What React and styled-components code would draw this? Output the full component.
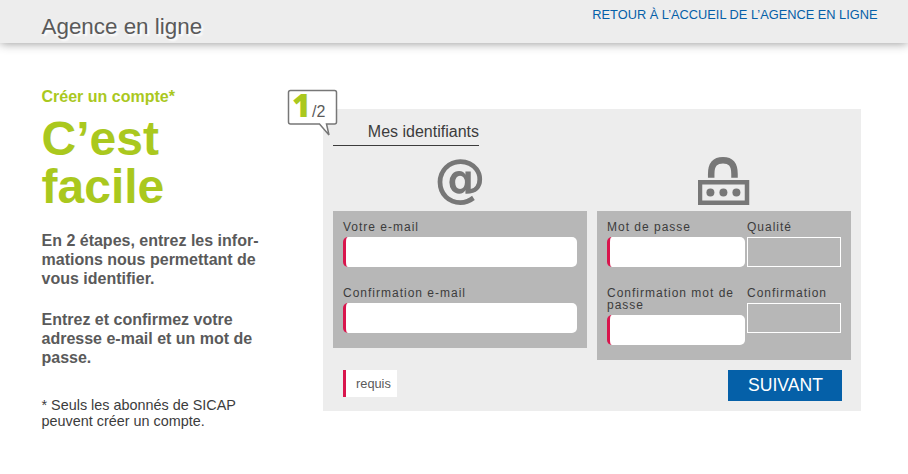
import React from "react";
import styled, { createGlobalStyle } from "styled-components";

const Global = createGlobalStyle`
  *, *::before, *::after { box-sizing: border-box; }
  body {
    margin: 0;
    background: #fff;
    color: #3c3c3c;
    font-family: "Liberation Sans", Arial, sans-serif;
    overflow: hidden;
  }
`;

const Header = styled.header`
  display: flex;
  justify-content: space-between;
  align-items: flex-start;
  height: 43px;
  padding: 0 30.5px 0 41.5px;
  background: #ededed;
  box-shadow: 0 0 10px rgba(0, 0, 0, 0.45);
`;

const SiteTitle = styled.h1`
  margin: 14px 0 0;
  font-size: 22.4px;
  line-height: 26px;
  font-weight: 400;
  color: #5a5a5a;
  text-shadow: 2px 2px 2px #fff;
`;

const BackLink = styled.a`
  margin-top: 7px;
  font-size: 12.8px;
  line-height: 15px;
  color: #0560a8;
  text-decoration: none;
`;

const Main = styled.main`
  display: flex;
  align-items: flex-start;
  padding-left: 41px;
`;

const Intro = styled.section`
  width: 282px;
  padding: 44px 0 0 0.5px;
`;

const Kicker = styled.p`
  margin: 0;
  font-size: 16px;
  line-height: 19px;
  font-weight: 700;
  color: #aac81e;
`;

const Slogan = styled.h2`
  margin: 9px 0 0;
  font-size: 48px;
  line-height: 48px;
  font-weight: 700;
  color: #aac81e;
`;

const Lead = styled.p`
  margin: ${(p) => p.$gap}px 0 0;
  font-size: 16px;
  line-height: 19px;
  font-weight: 700;
  color: #5a5a5a;
`;

const Footnote = styled.p`
  margin: 30px 0 0;
  font-size: 14.4px;
  line-height: 16px;
`;

const Panel = styled.form`
  position: relative;
  width: 538px;
  height: 302px;
  margin-top: 66px;
  padding: 10px;
  background: #ededed;
`;

const StepBadge = styled.div`
  position: absolute;
  left: -36px;
  top: -20px;
  width: 51px;
  height: 47px;
  display: flex;
  align-items: baseline;
  padding: 0 0 0 5px;
`;

const Bubble = styled.svg`
  position: absolute;
  inset: 0;
`;

const StepCurrent = styled.strong`
  position: relative;
  width: 20px;
  font-family: "Open Sans", "Noto Sans", sans-serif;
  font-size: 32px;
  line-height: 32px;
  font-weight: 800;
  color: #aac81e;
`;

const StepTotal = styled.span`
  position: relative;
  font-size: 16px;
  color: #5a5a5a;
`;

const Legend = styled.h3`
  width: 146px;
  height: 27px;
  margin: 0;
  padding-top: 3px;
  border-bottom: 1px solid #3c3c3c;
  font-size: 16px;
  line-height: 19px;
  font-weight: 400;
  text-align: right;
`;

const Columns = styled.div`
  display: grid;
  grid-template-columns: 254px 254px;
  gap: 10px;
  align-items: start;
`;

const Column = styled.div`
  display: flex;
  flex-direction: column;
`;

const IconSlot = styled.div`
  display: flex;
  justify-content: center;
  height: 65px;
  padding-top: 9px;
`;

const AtSign = styled.span`
  font-family: "DejaVu Sans", sans-serif;
  font-size: 51.5px;
  line-height: 46px;
  font-weight: 700;
  color: #777;
`;

const FieldBox = styled.div`
  display: grid;
  grid-template-columns: ${(p) => p.$columns};
  column-gap: 2px;
  row-gap: 20px;
  align-items: start;
  padding: 10px 10px 15px;
  background: #b7b7b7;
`;

const Field = styled.label`
  display: block;
`;

const Label = styled.span`
  display: block;
  margin-bottom: 4px;
  font-size: 12px;
  line-height: 12px;
  letter-spacing: 1px;
`;

const Input = styled.input`
  display: block;
  width: 100%;
  height: 30px;
  padding: 0 8px;
  border: 0;
  border-left: 3px solid #d9154d;
  border-radius: 5px;
  background: #fff;
  outline: none;
`;

const Meter = styled.span`
  display: block;
  height: 30px;
  border: 1px solid #fff;
`;

const Actions = styled.div`
  position: absolute;
  left: 20px;
  right: 19px;
  top: 261px;
  display: flex;
  justify-content: space-between;
  align-items: flex-start;
`;

const Required = styled.span`
  width: 54px;
  height: 27px;
  padding-left: 10px;
  border-left: 3px solid #d9154d;
  background: #fff;
  font-size: 12.8px;
  line-height: 27px;
  color: #5a5a5a;
`;

const Submit = styled.button`
  width: 114px;
  height: 31px;
  padding: 0 0 0 1px;
  border: 0;
  background: #0560a8;
  color: #fff;
  font-family: inherit;
  font-size: 17.6px;
  line-height: 31px;
`;

function LockIcon() {
  return (
    <svg width="52" height="50" viewBox="0 0 52 50" fill="none" stroke="#777">
      <path d="M13.2 22.8V19C13.2 9 17.5 5.2 25 5.2S36.5 9 36.5 19V22.8" strokeWidth="6.5" />
      <rect x="2" y="27.25" width="47" height="20.5" strokeWidth="4.5" />
      <g fill="#777" stroke="none">
        <circle cx="12.4" cy="37.4" r="4" />
        <circle cx="25.4" cy="37.4" r="4" />
        <circle cx="38.4" cy="37.4" r="4" />
      </g>
    </svg>
  );
}

export default function App() {
  return (
    <>
      <Global />
      <Header>
        <SiteTitle>Agence en ligne</SiteTitle>
        <BackLink>RETOUR À L’ACCUEIL DE L’AGENCE EN LIGNE</BackLink>
      </Header>
      <Main>
        <Intro>
          <Kicker>Créer un compte*</Kicker>
          <Slogan>C’est<br />facile</Slogan>
          <Lead $gap={20}>En 2 étapes, entrez les infor-<br />mations nous permettant de<br />vous identifier.</Lead>
          <Lead $gap={22}>Entrez et confirmez votre<br />adresse e-mail et un mot de<br />passe.</Lead>
          <Footnote>* Seuls les abonnés de SICAP<br />peuvent créer un compte.</Footnote>
        </Intro>
        <Panel>
          <StepBadge>
            <Bubble width="51" height="48" viewBox="0 0 51 48">
              <path
                d="M3.5 1.5H47.5Q49.5 1.5 49.5 3.5V33Q49.5 35 47.5 35H39.5L42 46L32.5 35H3.5Q1.5 35 1.5 33V3.5Q1.5 1.5 3.5 1.5Z"
                fill="#fff"
                stroke="#777"
                strokeWidth="1.5"
              />
            </Bubble>
            <StepCurrent>1</StepCurrent>
            <StepTotal>/2</StepTotal>
          </StepBadge>
          <Legend>Mes identifiants</Legend>
          <Columns>
            <Column>
              <IconSlot><AtSign>@</AtSign></IconSlot>
              <FieldBox $columns="1fr">
                <Field><Label>Votre e-mail</Label><Input type="email" /></Field>
                <Field><Label>Confirmation e-mail</Label><Input type="email" /></Field>
              </FieldBox>
            </Column>
            <Column>
              <IconSlot><LockIcon /></IconSlot>
              <FieldBox $columns="138px 94px">
                <Field><Label>Mot de passe</Label><Input type="password" /></Field>
                <Field as="div"><Label>Qualité</Label><Meter /></Field>
                <Field><Label>Confirmation mot de passe</Label><Input type="password" /></Field>
                <Field as="div"><Label>Confirmation</Label><Meter /></Field>
              </FieldBox>
            </Column>
          </Columns>
          <Actions>
            <Required>requis</Required>
            <Submit type="button">SUIVANT</Submit>
          </Actions>
        </Panel>
      </Main>
    </>
  );
}
